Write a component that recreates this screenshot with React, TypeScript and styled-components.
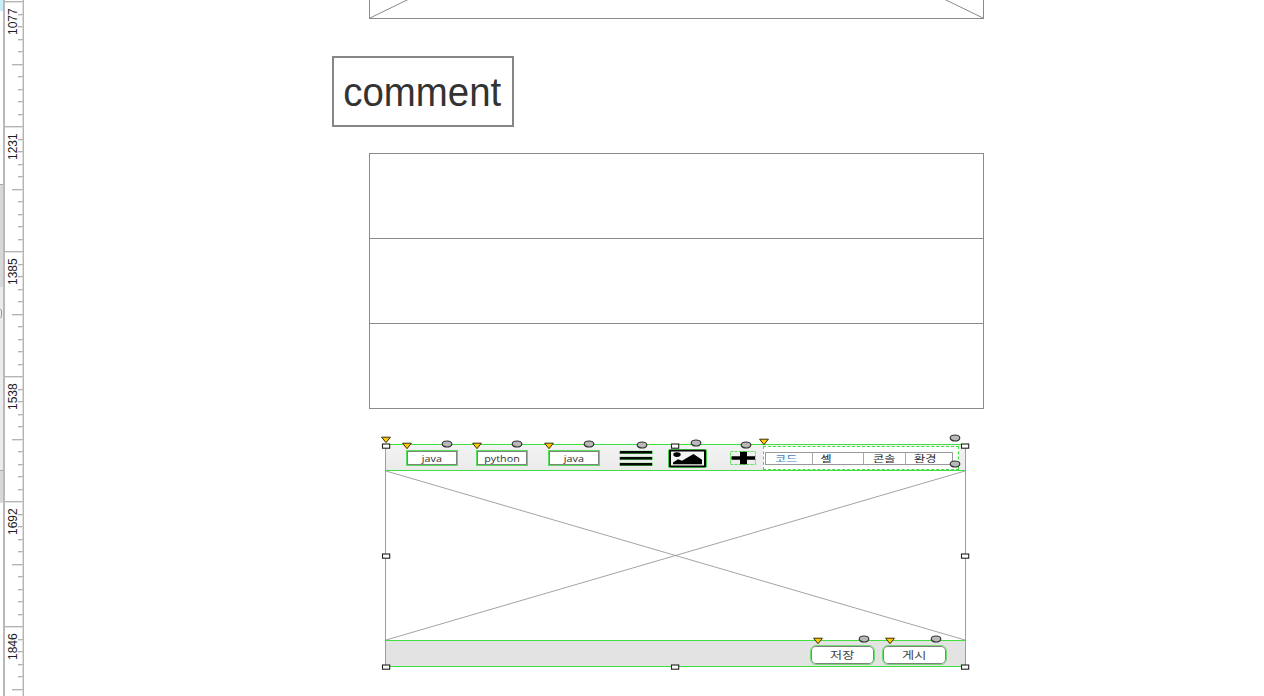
import React from "react";
import styled, { createGlobalStyle, css } from "styled-components";

const GlobalStyle = createGlobalStyle`
  * { box-sizing: border-box; }
  body { margin: 0; background: #fff; overflow: hidden; font-family: "Liberation Sans", Arial, sans-serif; }
`;

const GREEN = "#3fdf3f";
const RULER_WIDTH = 24;

const Page = styled.div`
  display: flex;
  width: 1264px;
  height: 696px;
  overflow: hidden;
`;

/* Panel edge and ruler */
const PanelEdge = styled.div`
  display: flex;
  flex-direction: column;
  flex: none;
  width: 3px;
`;
const EdgePart = styled.div<{ $h: number; $c: string }>`
  flex: none;
  height: ${(p) => p.$h}px;
  background: ${(p) => p.$c};
`;
const EdgeKnob = styled.div`
  flex: none;
  width: 2px;
  height: 9px;
  margin-bottom: -9px;
  position: relative;
  top: 22px;
  border: 1px solid #999;
  border-left: 0;
  border-radius: 0 2px 2px 0;
`;
const Ruler = styled.div`
  flex: none;
  width: 21px;
  height: 696px;
  padding-top: 1px;
  overflow: hidden;
  border-left: 2px solid #b9b9b9;
  border-right: 1px solid #b4b4b4;
  box-shadow: inset -1px 0 #dedede;
`;
const Segment = styled.div`
  display: flex;
  justify-content: space-between;
  height: 125.1px;
`;
const RulerLabel = styled.span`
  writing-mode: vertical-rl;
  transform: rotate(180deg);
  width: 14px;
  height: 27px;
  margin: 7px 0 0 1px;
  font-size: 12px;
  line-height: 14px;
  color: #221c26;
`;
const Ticks = styled.div`
  display: flex;
  flex-direction: column;
  align-items: flex-end;
  width: 3px;
`;
const Tick = styled.div<{ $w: number }>`
  flex: none;
  height: 12.51px;
  width: ${(p) => p.$w}px;
  border-top: 1px solid #b4b4b4;
  box-shadow: inset 0 1px #e2e2e2;
`;

/* Canvas: shapes sit where the designer dropped them */
const Canvas = styled.main`
  position: relative;
  flex: 1;
`;
const place = css<{ $x: number; $y: number; $w: number; $h: number }>`
  position: absolute;
  left: ${(p) => p.$x - RULER_WIDTH}px;
  top: ${(p) => p.$y}px;
  width: ${(p) => p.$w}px;
  height: ${(p) => p.$h}px;
`;
const Placeholder = styled.div`
  ${place}
  border: 1px solid #8a8a8a;
  svg { display: block; width: 100%; height: 100%; }
`;
const CommentBox = styled.div`
  ${place}
  display: flex;
  align-items: center;
  justify-content: center;
  padding-right: 2px;
  border: 2px solid #868686;
  color: #333;
  font-size: 40px;
  line-height: 44px;
`;
const CommentText = styled.span`
  transform: scaleX(0.96);
`;
const CommentList = styled.div`
  ${place}
  display: flex;
  flex-direction: column;
  border: 1px solid #8a8a8a;
`;
const CommentRow = styled.div`
  flex: 1;
  & + & { border-top: 1px solid #8a8a8a; }
`;
const Editor = styled.section`
  ${place}
  display: flex;
  flex-direction: column;
  border: 1px solid ${GREEN};
`;
const Toolbar = styled.header`
  display: flex;
  align-items: center;
  flex: none;
  height: 26px;
  padding: 1px 0 0 20px;
  background: linear-gradient(#f3f3f3, #ebebeb);
  border-bottom: 1px solid ${GREEN};
`;
const EditorBody = styled.div`
  flex: 1;
  min-height: 0;
  svg { display: block; width: 100%; height: 100%; }
`;
const Footer = styled.footer`
  display: flex;
  align-items: center;
  justify-content: flex-end;
  flex: none;
  gap: 7px;
  height: 26px;
  padding: 2px 18px 0 0;
  background: #e3e3e3;
  border-top: 1px solid ${GREEN};
`;
const Language = styled.div<{ $gap: number }>`
  display: flex;
  align-items: center;
  justify-content: center;
  flex: none;
  width: 52px;
  height: 16px;
  padding-top: 1px;
  margin-right: ${(p) => p.$gap}px;
  background: #fff;
  border: 1px solid #5ade5a;
  box-shadow: inset 0 0 0 1px #7c887c;
`;
const Action = styled.div`
  display: flex;
  align-items: center;
  justify-content: center;
  width: 65px;
  height: 20px;
  padding-right: 1px;
  background: #fff;
  border: 1px solid #74dc74;
  border-radius: 6px;
  box-shadow: inset 0 0 0 1px #7c827c;
`;
const Wide = styled.span<{ $s: number; $size: number; $c?: string }>`
  display: inline-block;
  transform: scaleX(${(p) => p.$s});
  color: ${(p) => p.$c ?? "#333"};
  font-family: "Open Sans", "Noto Sans CJK KR", sans-serif;
  font-size: ${(p) => p.$size}px;
  line-height: 12px;
  white-space: nowrap;
`;
const Icon = styled.svg<{ $gap: number }>`
  flex: none;
  display: block;
  margin-right: ${(p) => p.$gap}px;
`;
const TabFrame = styled.div`
  display: flex;
  align-items: center;
  flex: none;
  width: 196px;
  height: 24px;
  padding-left: 1px;
  background: #fff;
  border: 1px dashed ${GREEN};
`;
const Tabs = styled.div`
  display: flex;
  width: 188px;
  height: 13px;
  border: 1px solid #999;
`;
const Tab = styled.div<{ $w: number; $pad: number }>`
  display: flex;
  align-items: center;
  flex: none;
  width: ${(p) => p.$w}px;
  padding: 1px 0 0 ${(p) => p.$pad}px;
  & + & { border-left: 1px solid #aaa; }
`;

/* Selection handles lie over the shapes */
const Marker = styled.svg<{ $x: number; $y: number }>`
  position: absolute;
  left: ${(p) => p.$x - RULER_WIDTH - 6}px;
  top: ${(p) => p.$y - 5}px;
  width: 12px;
  height: 10px;
`;

const labels = ["1077", "1231", "1385", "1538", "1692", "1846"];
const tabs = [
  { text: "코드", w: 46, pad: 12, color: "#4a86c0" },
  { text: "셀", w: 51, pad: 9, color: "#222" },
  { text: "콘솔", w: 42, pad: 12, color: "#222" },
  { text: "환경", w: 47, pad: 11, color: "#222" },
];
const rounds = [[446.5, 444], [517, 444], [589, 444], [642, 445], [696, 442.5], [746.3, 445.3], [955, 438], [955, 463.7], [863.7, 639], [935.7, 639]];
const triangles = [[386, 440], [406.5, 446], [477, 446], [549, 446], [764, 441.5], [818.3, 640.5], [890.3, 640.5]];
const squares = [[386, 445.5], [675, 445.5], [965, 445.5], [386, 556.3], [965, 556.3], [386, 666.5], [675, 666.5], [965, 666.5]];

export default function App() {
  return (
    <>
      <GlobalStyle />
      <Page>
        <PanelEdge>
          <EdgePart $h={11} $c="#c9ecf8" />
          <EdgePart $h={173} $c="#fff" />
          <EdgePart $h={1} $c="#aaa" />
          <EdgePart $h={102} $c="#d8d8d8" />
          <EdgeKnob />
          <EdgePart $h={183} $c="#ececec" />
          <EdgePart $h={1} $c="#aaa" />
          <EdgePart $h={32} $c="#d8d8d8" />
        </PanelEdge>
        <Ruler>
          {labels.map((label) => (
            <Segment key={label}>
              <RulerLabel>{label}</RulerLabel>
              <Ticks>
                {Array.from({ length: 10 }, (_, i) => (
                  <Tick key={i} $w={i === 0 ? 18 : i === 5 ? 11 : 5} />
                ))}
              </Ticks>
            </Segment>
          ))}
        </Ruler>
        <Canvas>
          <Placeholder $x={369} $y={-281} $w={615} $h={300}>
            <svg viewBox="0 0 613 298" preserveAspectRatio="none" stroke="#888" strokeWidth="1">
              <path d="M0 298 613 0M0 0 613 298" />
            </svg>
          </Placeholder>
          <CommentBox $x={332} $y={56} $w={181.5} $h={71}>
            <CommentText>comment</CommentText>
          </CommentBox>
          <CommentList $x={369} $y={153} $w={615} $h={256}>
            <CommentRow />
            <CommentRow />
            <CommentRow />
          </CommentList>

          <Editor $x={385} $y={444} $w={581} $h={223}>
            <Toolbar>
              <Language $gap={18}><Wide $s={1.27} $size={8.5}>java</Wide></Language>
              <Language $gap={20}><Wide $s={1.27} $size={8.5}>python</Wide></Language>
              <Language $gap={19}><Wide $s={1.27} $size={8.5}>java</Wide></Language>
              <Icon $gap={15} width="34" height="16" viewBox="0 0 34 16">
                <path d="M.3 2.3h33.4M.3 8.3h33.4M.3 14.3h33.4" stroke="#53dc53" strokeWidth="3.2" />
                <path d="M1 2.3h32M1 8.3h32M1 14.3h32" stroke="#080808" strokeWidth="2.6" />
              </Icon>
              <Icon $gap={23} width="39" height="19" viewBox="0 0 39 19">
                <rect x=".2" y=".2" width="38.6" height="18.6" rx="1.5" fill="#1fc91f" />
                <rect x="1" y=".8" width="37" height="17.4" rx="1" fill="#050505" />
                <rect x="3" y="2.5" width="33" height="14" fill="#f4f4f4" />
                <ellipse cx="9" cy="5.6" rx="3.7" ry="2.3" />
                <path d="M5 15.3V13.5l5-3.3 4 1.6L25.5 5 34 10.8v4.5z" />
              </Icon>
              <Icon $gap={7} width="26" height="14" viewBox="0 0 26 14">
                <rect x=".5" y=".5" width="25" height="13" fill="none" stroke="#5be35b" strokeDasharray="3 1" />
                <path d="M1.5 5.2H10V.8h7v4.4h8v3.6h-8v4.4h-7V8.8H1.5z" />
              </Icon>
              <TabFrame>
                <Tabs>
                  {tabs.map((t) => (
                    <Tab key={t.text} $w={t.w} $pad={t.pad}>
                      <Wide $s={1.35} $size={9} $c={t.color}>{t.text}</Wide>
                    </Tab>
                  ))}
                </Tabs>
              </TabFrame>
            </Toolbar>
            <EditorBody>
              <svg viewBox="0 0 579 169" preserveAspectRatio="none" stroke="#8c8c8c" strokeWidth=".8">
                <path d="M0 0 579 169M0 169 579 0" />
              </svg>
            </EditorBody>
            <Footer>
              <Action><Wide $s={1.32} $size={10} $c="#444">저장</Wide></Action>
              <Action><Wide $s={1.32} $size={10} $c="#444">게시</Wide></Action>
            </Footer>
          </Editor>

          {squares.map(([x, y]) => (
            <Marker key={`s${x}-${y}`} $x={x} $y={y} viewBox="0 0 12 10">
              <rect x="2.5" y="3" width="7.2" height="4.2" fill="#fff" stroke="#222" strokeWidth="1.1" />
            </Marker>
          ))}
          {rounds.map(([x, y]) => (
            <Marker key={`r${x}-${y}`} $x={x} $y={y} viewBox="0 0 12 10">
              <ellipse cx="6" cy="5" rx="4.8" ry="3" fill="#b9b9b9" stroke="#333" strokeWidth="1.2" />
            </Marker>
          ))}
          {triangles.map(([x, y]) => (
            <Marker key={`t${x}-${y}`} $x={x} $y={y} viewBox="0 0 12 10">
              <path d="M1.6 2.2h8.8L6 7.7z" fill="#ffc800" stroke="#3a3000" strokeWidth="1" />
            </Marker>
          ))}
        </Canvas>
      </Page>
    </>
  );
}
